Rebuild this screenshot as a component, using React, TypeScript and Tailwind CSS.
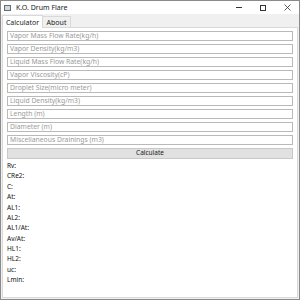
const fields = [
  'Vapor Mass Flow Rate(kg/h)',
  'Vapor Density(kg/m3)',
  'Liquid Mass Flow Rate(kg/h)',
  'Vapor Viscosity(cP)',
  'Droplet Size(micro meter)',
  'Liquid Density(kg/m3)',
  'Length (m)',
  'Diameter (m)',
  'Miscellaneous Drainings (m3)',
];

const results = ['Rv:', 'CRe2:', 'C:', 'At:', 'AL1:', 'AL2:', 'AL1/At:', 'Av/At:', 'HL1:', 'HL2:', 'uc:', 'Lmin:'];

export default function App() {
  return (
    <div className="w-[300px] h-[300px] bg-[#f0f0f0] border border-[#8a8a8a] flex flex-col overflow-hidden font-['Noto_Sans','Liberation_Sans',sans-serif] text-[#1a1a1a]">
      {/* title bar */}
      <div className="h-[13px] bg-white flex items-center shrink-0">
        <div className="ml-[3px] w-[7px] h-[6px] border border-[#6a6a6a] bg-[#cfd8e0]" />
        <span className="ml-[5px] text-[7px] leading-none">K.O. Drum Flare</span>
        <div className="ml-auto flex items-center h-full">
          <div className="w-[24px] flex justify-center">
            <div className="w-[6px] h-px bg-[#333]" />
          </div>
          <div className="w-[24px] flex justify-center">
            <div className="w-[6px] h-[6px] border border-[#333]" />
          </div>
          <div className="w-[24px] flex justify-center">
            <svg width="7" height="7" viewBox="0 0 7 7">
              <path d="M0.5 0.5L6.5 6.5M6.5 0.5L0.5 6.5" stroke="#333" strokeWidth="0.8" />
            </svg>
          </div>
        </div>
      </div>

      {/* tabs */}
      <div className="flex items-end h-[13px] px-[1px] shrink-0">
        <div className="h-[13px] w-[41px] bg-white border border-b-0 border-[#d9d9d9] flex items-center justify-center text-[7px] leading-none relative top-px z-10">
          Calculator
        </div>
        <div className="h-[11px] w-[28px] bg-[#f0f0f0] border border-l-0 border-b-0 border-[#d9d9d9] flex items-center justify-center text-[7px] leading-none">
          About
        </div>
      </div>

      {/* panel */}
      <div className="flex-1 bg-white border border-[#d9d9d9] mx-[1px] mb-[1px] px-[4px] pt-[3px] flex flex-col">
        <div className="flex flex-col gap-[3px]">
          {fields.map((f) => (
            <div
              key={f}
              className="h-[10px] border border-[#b9b9b9] flex items-center px-[2px] text-[6.8px] leading-none text-[#9a9a9a]"
            >
              {f}
            </div>
          ))}
        </div>
        <div className="mt-[3px] h-[11px] bg-[#e1e1e1] border border-[#c8c8c8] flex items-center justify-center text-[6.5px] leading-none">
          Calculate
        </div>
        <div className="mt-[2px] flex flex-col">
          {results.map((r) => (
            <div key={r} className="h-[10.4px] flex items-center text-[6.5px] leading-none text-[#111]">
              {r}
            </div>
          ))}
        </div>
      </div>
    </div>
  );
}
